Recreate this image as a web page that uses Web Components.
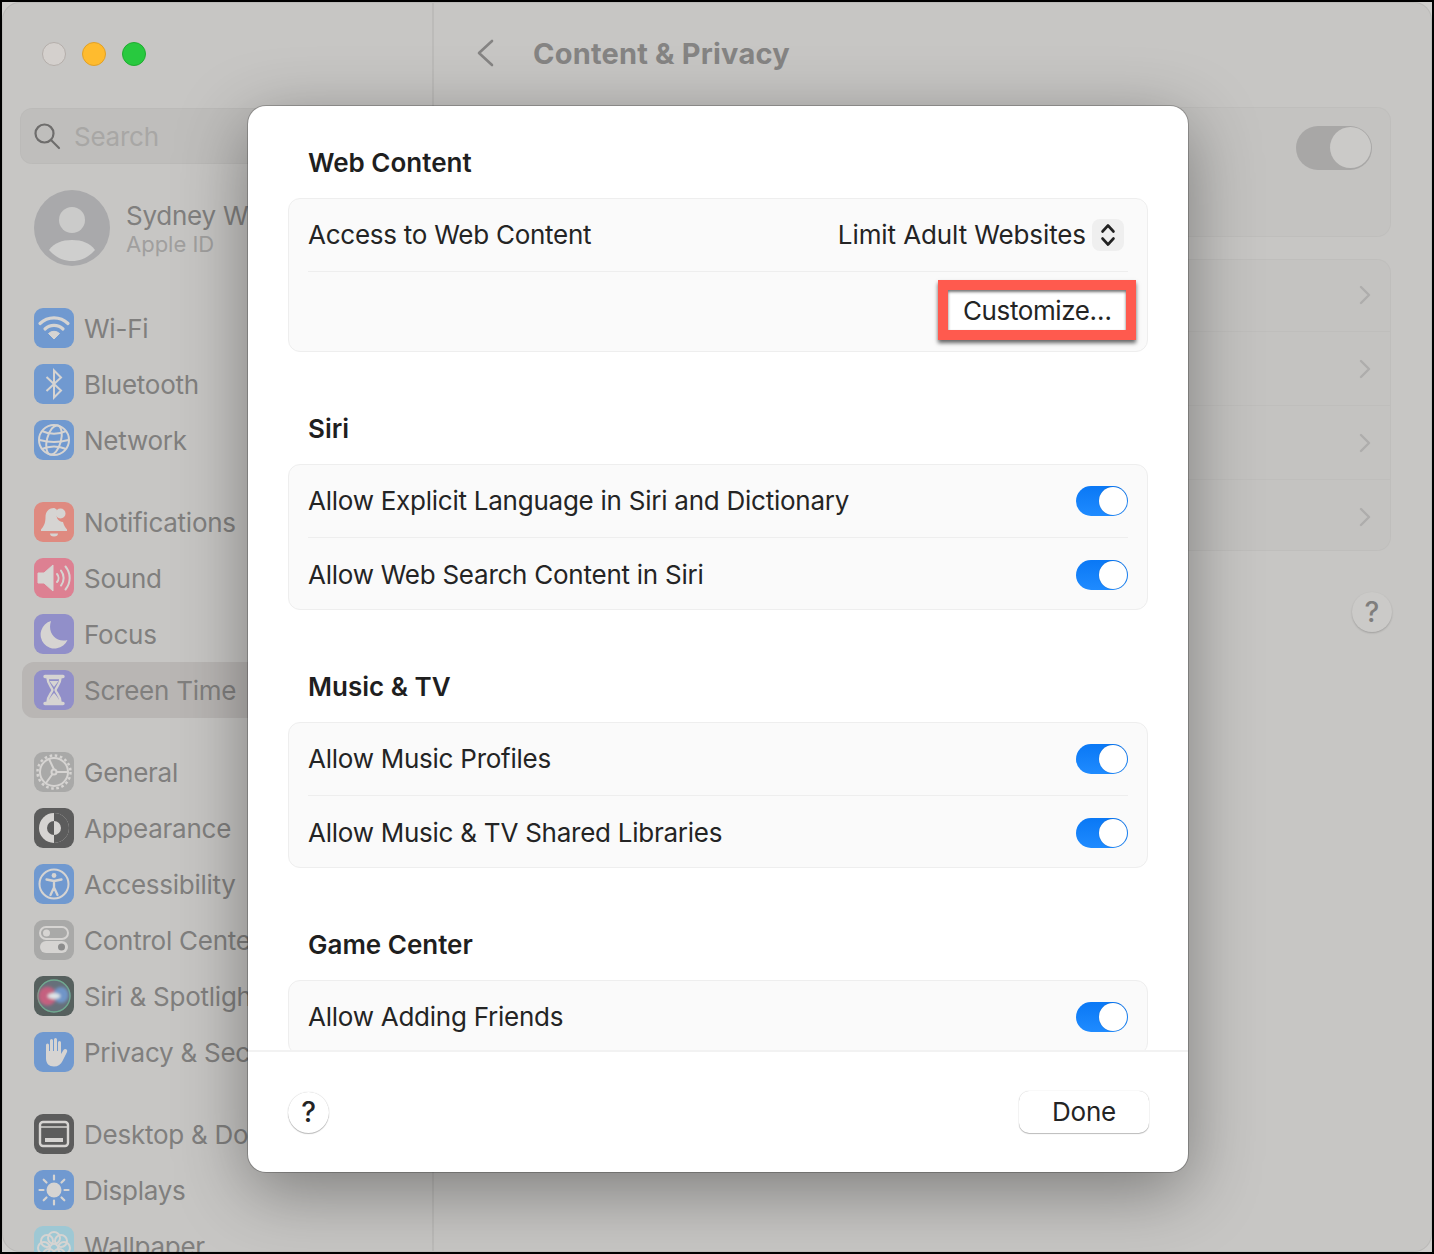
<!DOCTYPE html>
<html lang="en">
<head>
<meta charset="utf-8">
<title>Content & Privacy</title>
<style>
  html, body { margin: 0; height: 1254px; overflow: hidden; background: #000; }
  body { font-family: Inter, "Liberation Sans", sans-serif; }
</style>
</head>
<body>
<settings-window>
  <settings-sidebar slot="sidebar">
    <side-group>
      <side-item icon="wifi">Wi-Fi</side-item>
      <side-item icon="bluetooth">Bluetooth</side-item>
      <side-item icon="network">Network</side-item>
    </side-group>
    <side-group>
      <side-item icon="notifications">Notifications</side-item>
      <side-item icon="sound">Sound</side-item>
      <side-item icon="focus">Focus</side-item>
      <side-item icon="screentime" selected>Screen Time</side-item>
    </side-group>
    <side-group>
      <side-item icon="general">General</side-item>
      <side-item icon="appearance">Appearance</side-item>
      <side-item icon="accessibility">Accessibility</side-item>
      <side-item icon="control">Control Center</side-item>
      <side-item icon="siri">Siri &amp; Spotlight</side-item>
      <side-item icon="privacy">Privacy &amp; Security</side-item>
    </side-group>
    <side-group>
      <side-item icon="desktop">Desktop &amp; Dock</side-item>
      <side-item icon="displays">Displays</side-item>
      <side-item icon="wallpaper">Wallpaper</side-item>
    </side-group>
  </settings-sidebar>
  <settings-pane slot="pane"></settings-pane>
  <web-sheet slot="sheet">
    <sheet-section>
      <span slot="title">Web Content</span>
      <sheet-row>
        Access to Web Content
        <popup-value slot="end">Limit Adult Websites</popup-value>
      </sheet-row>
      <customize-row>Customize…</customize-row>
    </sheet-section>
    <sheet-section>
      <span slot="title">Siri</span>
      <sheet-row>Allow Explicit Language in Siri and Dictionary<on-toggle slot="end"></on-toggle></sheet-row>
      <sheet-row last>Allow Web Search Content in Siri<on-toggle slot="end"></on-toggle></sheet-row>
    </sheet-section>
    <sheet-section>
      <span slot="title">Music &amp; TV</span>
      <sheet-row>Allow Music Profiles<on-toggle slot="end"></on-toggle></sheet-row>
      <sheet-row last>Allow Music &amp; TV Shared Libraries<on-toggle slot="end"></on-toggle></sheet-row>
    </sheet-section>
    <sheet-section>
      <span slot="title">Game Center</span>
      <sheet-row>Allow Adding Friends<on-toggle slot="end"></on-toggle></sheet-row>
    </sheet-section>
  </web-sheet>
</settings-window>

<script>
// Small helper: every component is a template cloned into an open shadow root
function component(name, html, setup) {
  const template = document.createElement("template")
  template.innerHTML = html
  customElements.define(name, class extends HTMLElement {
    constructor() {
      super()
      this.attachShadow({ mode: "open" }).append(template.content.cloneNode(true))
    }
    connectedCallback() {
      if (setup) setup(this, this.shadowRoot)
    }
  })
}

component("settings-window", `
  <style>
    :host { display: block; box-sizing: border-box; width: 1430px; height: 1250px; margin: 2px; background: #cfcecc; }
    .frame {
      position: relative; display: flex; height: 100%; overflow: hidden;
      border-radius: 18px; background: #c7c6c4;
      box-shadow: inset 0 0 0 1px rgba(0,0,0,.06);
    }
    .left { flex: 0 0 432px; box-sizing: border-box; border-right: 2px solid #bcbbb9; overflow: hidden; }
    .right { flex: 1; min-width: 0; }
  </style>
  <div class="frame">
    <div class="left"><slot name="sidebar"></slot></div>
    <div class="right"><slot name="pane"></slot></div>
    <slot name="sheet"></slot>
  </div>
`)

component("settings-sidebar", `
  <style>
    :host { display: block; height: 1250px; overflow: hidden; color: #807f7e; font-size: 26px; letter-spacing: -.25px; }
    .lights { display: flex; gap: 16px; padding: 40px 0 0 40px; height: 66px; box-sizing: border-box; }
    .lights i { width: 24px; height: 24px; box-sizing: border-box; border-radius: 50%; border: 1px solid; }
    .close { background: #d4d0cd; border-color: #b4aeaa !important; }
    .min { background: #ffbb2e; border-color: #e0a028 !important; }
    .zoom { background: #28c93f; border-color: #20ac30 !important; }
    .search {
      display: flex; align-items: center; gap: 13px; box-sizing: border-box;
      height: 56px; margin: 40px 0 0 18px; padding-left: 13px;
      border-radius: 12px; background: #bfbebc; box-shadow: inset 0 0 0 1px rgba(0,0,0,.02);
      color: #a8a7a5;
    }
    .account { display: flex; align-items: center; gap: 16px; margin: 26px 0 34px 32px; height: 76px; }
    .who { display: flex; flex-direction: column; white-space: nowrap; padding-top: 2px; }
    .name { line-height: 30px; margin-bottom: -1px; }
    .sub { font-size: 22px; line-height: 28px; color: #a09f9e; letter-spacing: 0; }
  </style>
  <div class="lights"><i class="close"></i><i class="min"></i><i class="zoom"></i></div>
  <div class="search">
    <svg width="28" height="28" viewBox="0 0 28 28" fill="none" stroke="#6e6d6c" stroke-width="2.2" stroke-linecap="round"><circle cx="11.5" cy="11.5" r="9"/><path d="M18 18l8 8"/></svg>
    Search
  </div>
  <div class="account">
    <svg width="76" height="76" viewBox="0 0 76 76"><circle cx="38" cy="38" r="38" fill="#a9a9ab"/><circle cx="38" cy="30" r="13" fill="#cbcbca"/><path d="M15 60c5-7 13-10 23-10s18 3 23 10c-6 7-14 11-23 11s-17-4-23-11z" fill="#cfcfce"/></svg>
    <div class="who"><span class="name">Sydney W</span><span class="sub">Apple ID</span></div>
  </div>
  <slot></slot>
`)

component("side-group", `
  <style>
    :host { display: block; margin-bottom: 26px; }
  </style>
  <slot></slot>
`)

const L = "#d6d4d2"
const BLUE = "#7099d0"
const sideIcons = {
  wifi: [BLUE, `<path d="M6 15.5a20 20 0 0 1 28 0M11 21a13 13 0 0 1 18 0" fill="none" stroke="${L}" stroke-width="3.2" stroke-linecap="round"/><path d="M20 31l-5.5-5.5a8 8 0 0 1 11 0z" fill="${L}" stroke="${L}" stroke-linejoin="round"/>`],
  bluetooth: [BLUE, `<path d="M12.5 13L27 26.5 20 33.500V6.500L27 13.500 12.500 27" fill="none" stroke="${L}" stroke-width="2"/>`],
  network: [BLUE, `<g fill="none" stroke="${L}" stroke-width="2"><circle cx="20" cy="20" r="15"/><ellipse cx="20" cy="20" rx="7" ry="15" transform="rotate(15 20 20)"/><path d="M8 11c7 3.500 17 3.500 24 0M5.500 20c9 2.500 20 2.500 29 0M8 29c7-3.500 17-3.500 24 0"/></g>`],
  notifications: ["#df8a80", `<path d="M20 6c-5.500 0-8.500 4-8.500 9 0 6-1.500 9-4.500 12.500v1.500h26v-1.500c-2-2.300-3.300-4.500-4-7.500-5 0-8-5-6-12-1-1-2-2-3-2z" fill="${L}"/><path d="M16 31.500h8a4 3 0 0 1-8 0z" fill="${L}"/><circle cx="26.500" cy="11.500" r="5" fill="${L}"/>`],
  sound: ["#dd8092", `<path d="M4 15h6l9-8v26l-9-8H4z" fill="${L}" stroke="${L}" stroke-linejoin="round"/><path d="M23 16a6 6 0 0 1 0 8M27 12.500a12 12 0 0 1 0 15M31.500 8.500a18 18 0 0 1 0 23" fill="none" stroke="${L}" stroke-width="2" stroke-linecap="round"/>`],
  focus: ["#918fc9", `<path d="M17 7a14 14 0 1 0 16.500 19C22 29 13 19 17 7z" fill="${L}"/>`],
  screentime: ["#918fc9", `<path d="M11 6.500h18M11 33.500h18" stroke="${L}" stroke-width="3.400" stroke-linecap="round"/><path d="M13.500 8h13c0 6-4 8.500-5 12 1 3.500 5 6 5 12h-13c0-6 4-8.500 5-12-1-3.500-5-6-5-12z" fill="none" stroke="${L}" stroke-width="2.400"/><path d="M14.500 31c1-3.500 3.500-5.500 5.500-8 2 2.500 4.500 4.500 5.500 8zM15.500 11h9l-4.500 6z" fill="${L}"/>`],
  general: ["#a9a9a8", `<g fill="none" stroke="${L}" stroke-width="2"><circle cx="20" cy="20" r="14"/><circle cx="20" cy="20" r="16.500" stroke-width="2.500" stroke-dasharray="2.600 2.600"/><circle cx="20" cy="20" r="2.500"/><path d="M20 17.500L15 7M22.500 20H33.500M18.500 22L12 31"/></g>`],
  appearance: ["#5c5c5c", `<circle cx="20" cy="20" r="15" fill="${L}"/><path d="M20 5a15 15 0 0 1 0 30z" fill="#5c5c5c"/><circle cx="20" cy="20" r="7" fill="#5c5c5c"/><path d="M20 13a7 7 0 0 1 0 14z" fill="${L}"/>`],
  accessibility: [BLUE, `<circle cx="20" cy="20" r="14.500" fill="none" stroke="${L}" stroke-width="2"/><circle cx="20" cy="11.500" r="2.400" fill="${L}"/><path d="M12.500 15.500L20 17l7.500-1.500M20 17v6.500M20 23.500L16.500 31M20 23.500L23.500 31" fill="none" stroke="${L}" stroke-width="2.300" stroke-linecap="round" stroke-linejoin="round"/>`],
  control: ["#a9a9a8", `<rect x="6" y="7" width="28" height="12" rx="6" fill="none" stroke="${L}" stroke-width="2"/><circle cx="12.500" cy="13" r="3.500" fill="${L}"/><rect x="6" y="21" width="28" height="12" rx="6" fill="${L}"/><circle cx="27.500" cy="27" r="3.500" fill="#8c8c8c"/>`],
  siri: ["#56605e", `<defs><filter id="soft" x="-30%" y="-30%" width="160%" height="160%"><feGaussianBlur stdDeviation="1.800"/></filter></defs><circle cx="20" cy="20" r="16.500" fill="#66707a"/><circle cx="20" cy="20" r="16" fill="none" stroke="#6fa98f" stroke-width="1.400"/><g filter="url(#soft)"><ellipse cx="13.500" cy="20" rx="9" ry="9.500" fill="#c4607f"/><ellipse cx="27" cy="19" rx="7.500" ry="8" fill="#6f95c8"/><ellipse cx="20" cy="20" rx="6.500" ry="3" fill="#dfe6e8"/></g>`],
  privacy: [BLUE, `<path d="M13.500 22V13M17.500 20V8.500M21.500 20V7.500M25.500 22V10.500" fill="none" stroke="${L}" stroke-width="3" stroke-linecap="round"/><path d="M12 19h15v3l2.500-4c1.500-2 4.500-.5 3.500 2L28.500 29c-1.500 3.500-4.500 5.500-8.500 5.500-5 0-8-3-8-8z" fill="${L}"/>`],
  desktop: ["#5c5c5c", `<rect x="6" y="8" width="28" height="24" rx="3" fill="none" stroke="${L}" stroke-width="2.400"/><path d="M6.500 13h27" stroke="${L}" stroke-width="1.600"/><rect x="11" y="24" width="18" height="4" fill="${L}"/>`],
  displays: [BLUE, `<circle cx="20" cy="20" r="7.500" fill="${L}"/><path d="M20 5.500v4M20 30.500v4M5.500 20h4M30.500 20h4M9.700 9.700l2.800 2.800M27.500 27.500l2.800 2.800M9.700 30.300l2.800-2.800M27.500 12.500l2.800-2.800" stroke="${L}" stroke-width="2.200" stroke-linecap="round"/>`],
  wallpaper: ["#9ec8d4", `<g fill="none" stroke="${L}" stroke-width="2"><circle cx="20" cy="12" r="6"/><circle cx="13" cy="15" r="6"/><circle cx="27" cy="15" r="6"/><circle cx="10" cy="22" r="6"/><circle cx="30" cy="22" r="6"/><circle cx="15" cy="29" r="6"/><circle cx="25" cy="29" r="6"/></g>`]
}

component("side-item", `
  <style>
    :host { display: block; }
    .row {
      display: flex; align-items: center; gap: 10px; box-sizing: border-box;
      height: 56px; margin-left: 20px; padding-left: 12px; white-space: nowrap;
      border-radius: 12px 0 0 12px;
    }
    :host([selected]) .row { background: #b9b6b4; }
    svg { flex: none; display: block; }
    #icon { display: contents; }
  </style>
  <div class="row"><span id="icon"></span><slot></slot></div>
`, (host, root) => {
  const [bg, glyph] = sideIcons[host.getAttribute("icon")]
  root.getElementById("icon").innerHTML = `<svg width="40" height="40" viewBox="0 0 40 40"><rect width="40" height="40" rx="9" fill="${bg}"/>${glyph}</svg>`
})

const paneChevron = `<svg width="12" height="20" viewBox="0 0 12 20" fill="none" stroke="#aeadac" stroke-width="2.400" stroke-linecap="round" stroke-linejoin="round"><path d="M2 2l8 8-8 8"/></svg>`

component("settings-pane", `
  <style>
    :host { display: block; color: #807f7e; }
    .head { display: flex; align-items: center; height: 105px; box-sizing: border-box; padding: 0 0 2px 42px; gap: 39px; }
    .head svg { margin-bottom: 2px; }
    h1 { margin: 0; font-size: 29px; font-weight: 700; color: #858483; letter-spacing: .2px; line-height: 36px; }
    .card { margin: 0 41px 22px 40px; border-radius: 14px; background: #c4c3c1; box-shadow: inset 0 0 0 1px rgba(0,0,0,.025); }
    .master { height: 130px; display: flex; align-items: flex-start; justify-content: flex-end; padding: 19px 19px 0 0; box-sizing: border-box; }
    .master .sw { width: 76px; height: 44px; border-radius: 22px; background: #a8a7a6; position: relative; }
    .master .sw i { position: absolute; right: 1px; top: 1px; width: 41px; height: 41px; border-radius: 50%; background: #cbcac8; }
    .rows { height: 292px; overflow: hidden; margin-bottom: 0; }
    .rows div { height: 74px; display: flex; align-items: center; justify-content: flex-end; padding-right: 20px; box-sizing: border-box; border-top: 1px solid #bfbebc; }
    .rows div:first-child { border-top: 0; height: 72px; }
    .help { display: flex; justify-content: flex-end; margin: 41px 40px 0 0; }
    .help span {
      width: 40px; height: 40px; border-radius: 50%; background: #cbcac8; box-shadow: 0 1px 2px rgba(0,0,0,.2);
      font-size: 28px; font-weight: 500; text-align: center; line-height: 40px; color: #7f7e7d;
    }
  </style>
  <div class="head">
    <svg width="18" height="28" viewBox="0 0 18 28" fill="none" stroke="#858483" stroke-width="2.600" stroke-linecap="round" stroke-linejoin="round"><path d="M16 2L3 14l13 12"/></svg>
    <h1>Content &amp; Privacy</h1>
  </div>
  <div class="card master"><div class="sw"><i></i></div></div>
  <div class="card rows">
    <div>${paneChevron}</div>
    <div>${paneChevron}</div>
    <div>${paneChevron}</div>
    <div>${paneChevron}</div>
  </div>
  <div class="help"><span>?</span></div>
`)

// the sheet floats above the window, so it is the one absolutely placed box
component("web-sheet", `
  <style>
    :host {
      position: absolute; left: 246px; top: 104px; width: 940px; height: 1066px;
      display: flex; flex-direction: column; overflow: visible; border-radius: 18px; background: #fff;
      box-shadow: 0 0 0 1px rgba(0,0,0,.22), 0 18px 70px rgba(0,0,0,.38);
      color: #242424; font-size: 26px; letter-spacing: -.25px;
    }
    .scroll { height: 944px; overflow: hidden; box-sizing: border-box; padding: 41px 40px 0; border-radius: 18px 18px 0 0; }
    .foot {
      flex: 1; display: flex; align-items: center; justify-content: space-between;
      padding: 0 39px 0 40px; border-top: 2px solid #f2f2f2; box-sizing: border-box;
    }
    .q {
      width: 41px; height: 41px; border-radius: 50%; background: #fff; text-align: center; line-height: 41px;
      font-size: 28px; font-weight: 500; box-shadow: 0 0 1px rgba(0,0,0,.25), 0 1px 1px rgba(0,0,0,.25);
    }
    .done {
      width: 130px; height: 42px; border-radius: 10px; background: #fff; text-align: center; line-height: 41px;
      box-shadow: 0 0 1px rgba(0,0,0,.25), 0 1px 1px rgba(0,0,0,.25);
    }
  </style>
  <div class="scroll"><slot></slot></div>
  <div class="foot"><span class="q">?</span><span class="done">Done</span></div>
`)

component("sheet-section", `
  <style>
    :host { display: block; margin-bottom: 61px; }
    .title { margin: 0 0 19px 20px; font-weight: 600; line-height: 32px; color: #1f1f1f; letter-spacing: 0; }
    .card {
      border: 1px solid #eeeeee; border-radius: 12px; background: #fafafa; overflow: hidden;
    }
  </style>
  <div class="title"><slot name="title"></slot></div>
  <div class="card"><slot></slot></div>
`)

component("sheet-row", `
  <style>
    :host { display: block; }
    .row {
      display: flex; align-items: center; justify-content: space-between; box-sizing: border-box;
      height: 73px; margin: 0 19px 0 19px; border-bottom: 1px solid #eeeeee; white-space: nowrap;
    }
    :host([last]) .row { border-bottom: 0; height: 71px; padding-top: 2px; }
    .text { line-height: 30px; }
  </style>
  <div class="row"><span class="text"><slot></slot></span><slot name="end"></slot></div>
`)

component("popup-value", `
  <style>
    :host { display: flex; align-items: center; gap: 6px; margin-right: 4px; letter-spacing: -.1px; line-height: 30px; }
    .step { width: 32px; height: 32px; border-radius: 8px; background: #efefef; display: flex; align-items: center; justify-content: center; }
  </style>
  <slot></slot>
  <span class="step"><svg width="16" height="26" viewBox="0 0 16 26" fill="none" stroke="#222" stroke-width="2.600" stroke-linecap="round" stroke-linejoin="round"><path d="M2.500 9.500L8 3.500l5.500 6M2.500 16.500L8 22.500l5.500-6"/></svg></span>
`)

component("customize-row", `
  <style>
    :host { display: flex; justify-content: flex-end; height: 79px; padding: 8px 11px 0 0; box-sizing: border-box; letter-spacing: -.4px; }
    .mark {
      box-sizing: border-box; width: 198px; height: 60px; padding-left: 15px;
      display: flex; align-items: center;
      border: 10px solid #ff5a4e; background: #fff; white-space: nowrap;
      box-shadow: 0 3px 4px rgba(0,0,0,.6), inset 0 2px 3px rgba(0,0,0,.55);
    }
  </style>
  <div class="mark"><slot></slot></div>
`)

component("on-toggle", `
  <style>
    :host { display: block; position: relative; width: 52px; height: 30px; border-radius: 15px; background: linear-gradient(#0a78f5, #1f8bff); }
    i { position: absolute; right: 1px; top: 1px; width: 28px; height: 28px; border-radius: 50%; background: #fff; box-shadow: 0 0 1px rgba(0,0,0,.3); }
  </style>
  <i></i>
`)
</script>
</body>
</html>
